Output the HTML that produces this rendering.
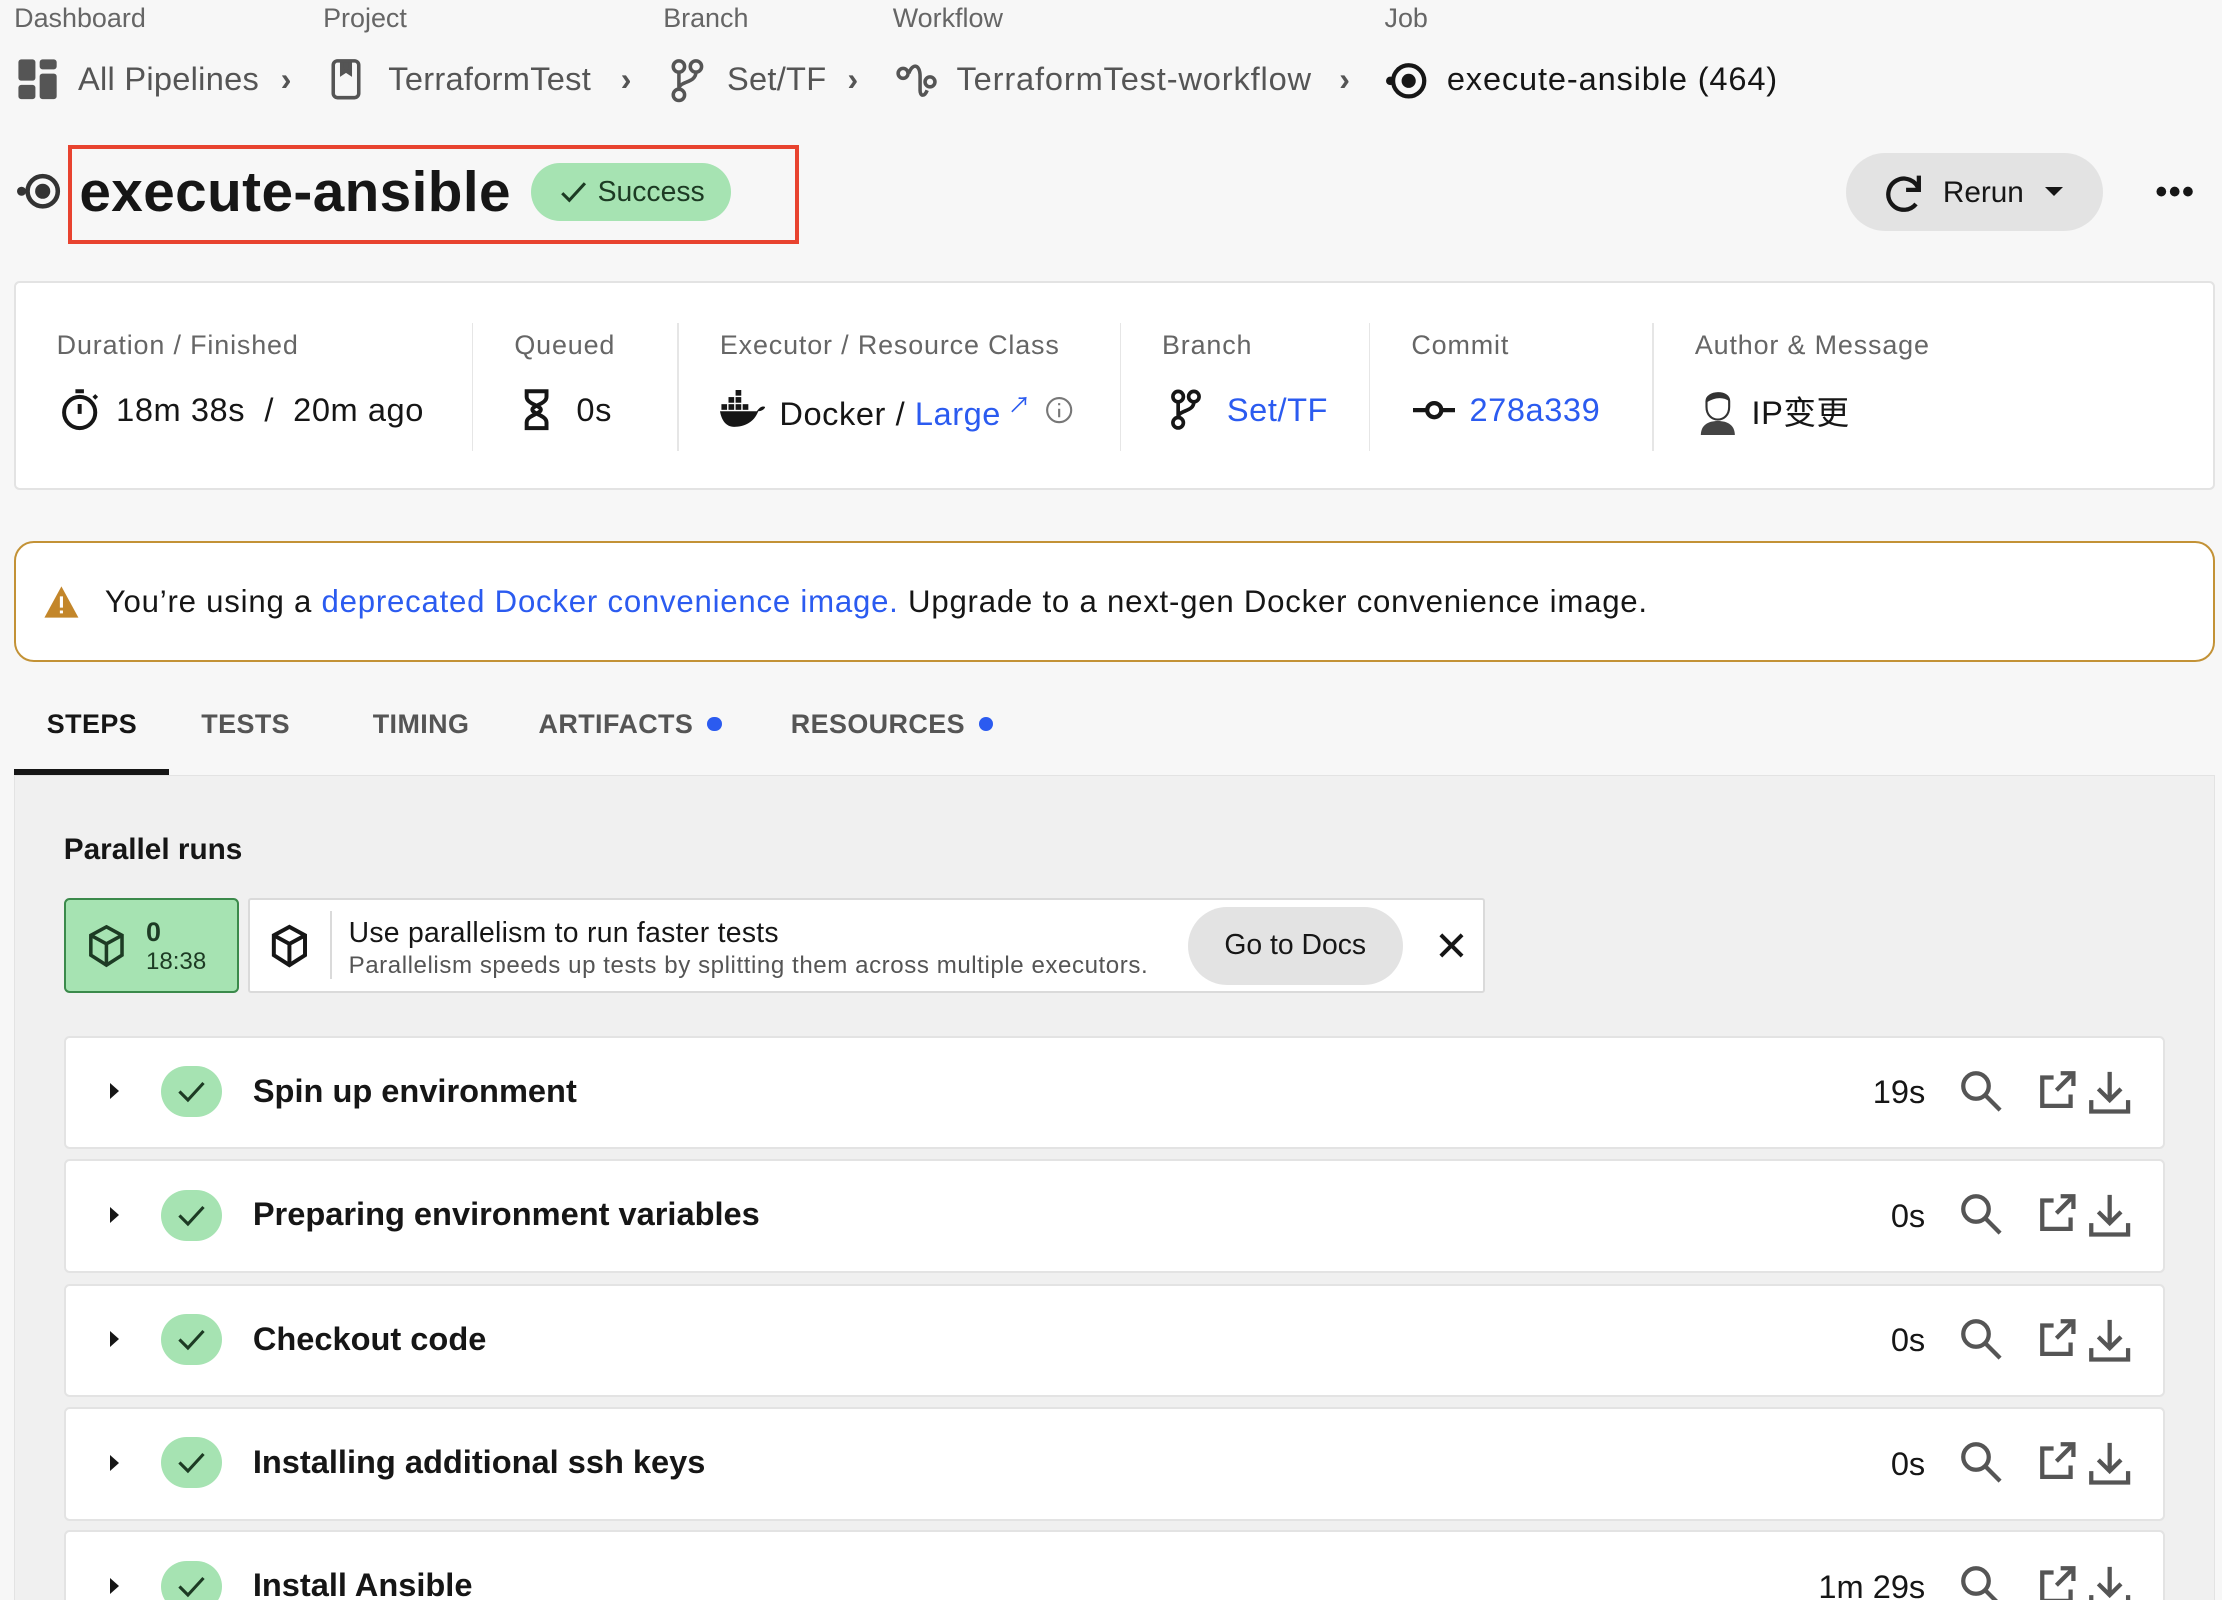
<!DOCTYPE html>
<html><head><meta charset="utf-8"><style>
*{box-sizing:border-box;margin:0;padding:0}
html,body{width:2222px;height:1600px;overflow:hidden;background:#f7f7f7}
#w{position:relative;width:1568px;height:1129px;zoom:1.41709;font-family:"Liberation Sans","Noto Sans CJK SC",sans-serif;color:#161616}
.a{position:absolute;white-space:nowrap}
.lbl{font-size:19px;color:#666;top:2px}
.bc{font-size:23px;color:#555;top:42px;letter-spacing:0.2px}
.cl{font-size:19px;color:#666;top:233px;letter-spacing:0.6px}
.cv{font-size:23px;top:273px;display:flex;align-items:center;gap:10px;letter-spacing:0.4px}
.div{position:absolute;top:228px;width:1px;height:90px;background:#e6e6e6}
.blue{color:#2b5bf0}
.tab{font-size:19px;font-weight:bold;color:#555;top:500px;display:flex;align-items:center;gap:10px;letter-spacing:0.3px}
.dot{width:10px;height:10px;border-radius:50%;background:#2b5bf0;display:inline-block}
.row{position:absolute;left:45px;width:1483px;height:80px;background:#fff;border:2px solid #e3e3e3;border-radius:4px}
.row .tri{position:absolute;left:31px;top:32px;width:0;height:0;border-left:7px solid #161616;border-top:6px solid transparent;border-bottom:6px solid transparent}
.row .ck{position:absolute;left:67px;top:20px;width:43px;height:36px;border-radius:18px;background:#a6e3b2}
.row .t{position:absolute;left:132px;top:24px;font-size:23px;font-weight:bold}
.row .tm{position:absolute;right:168px;top:25px;font-size:23px}
.row svg.ic{position:absolute;top:22px}
</style></head><body><div id="w">
<div class="a lbl" style="left:10px">Dashboard</div>
<div class="a lbl" style="left:228px">Project</div>
<div class="a lbl" style="left:468px">Branch</div>
<div class="a lbl" style="left:630px">Workflow</div>
<div class="a lbl" style="left:977px">Job</div>

<svg class="a" style="left:12px;top:41px" width="30" height="30" viewBox="0 0 30 30" fill="#555"><rect x="1" y="1" width="12" height="15" rx="2"/><rect x="16" y="1" width="12" height="7" rx="2"/><rect x="1" y="19" width="12" height="10" rx="2"/><rect x="16" y="11" width="12" height="18" rx="2"/></svg>
<div class="a bc" style="left:55px">All Pipelines</div>
<div class="a bc" style="left:198px;font-weight:bold">›</div>
<svg class="a" style="left:232px;top:41px" width="24" height="30" viewBox="0 0 24 30" fill="none" stroke="#555" stroke-width="2.5"><rect x="3" y="2" width="18" height="26" rx="3"/><path d="M9 3v8l3-2 3 2V3" fill="#555"/></svg>
<div class="a bc" style="left:274px">TerraformTest</div>
<div class="a bc" style="left:438px;font-weight:bold">›</div>
<svg class="a" style="left:472px;top:41px" width="26" height="32" viewBox="0 0 26 32" fill="none" stroke="#555" stroke-width="2.5"><circle cx="7" cy="6" r="4"/><circle cx="19" cy="6" r="4"/><circle cx="7" cy="26" r="4"/><path d="M7 10v12M19 10c0 8-12 6-12 12"/></svg>
<div class="a bc" style="left:513px">Set/TF</div>
<div class="a bc" style="left:598px;font-weight:bold">›</div>
<svg class="a" style="left:632px;top:44px" width="30" height="26" viewBox="0 0 30 26" fill="none" stroke="#555" stroke-width="2.5"><circle cx="5" cy="8" r="3.5"/><circle cx="24" cy="14" r="3.5"/><path d="M9 8c3-8 8-6 8 2v10c0 4 3 5 5 0"/></svg>
<div class="a bc" style="left:675px;letter-spacing:0.6px">TerraformTest-workflow</div>
<div class="a bc" style="left:945px;font-weight:bold">›</div>
<svg class="a" style="left:978px;top:43px" width="30" height="28" viewBox="0 0 30 28"><circle cx="16" cy="14" r="11" fill="none" stroke="#161616" stroke-width="3"/><circle cx="16" cy="14" r="5" fill="#161616"/><circle cx="3" cy="14" r="3" fill="#161616"/></svg>
<div class="a bc" style="left:1021px;color:#161616;letter-spacing:0.6px">execute-ansible (464)</div>

<svg class="a" style="left:12px;top:120px" width="32" height="30" viewBox="0 0 30 28"><circle cx="17" cy="14" r="10" fill="none" stroke="#333" stroke-width="3"/><circle cx="17" cy="14" r="5" fill="#333"/><circle cx="3" cy="14" r="3" fill="#333"/></svg>
<div class="a" style="left:48px;top:102px;width:516px;height:70px;border:3px solid #e8432f"></div>
<div class="a" style="left:56px;top:113px;font-size:40px;font-weight:bold;letter-spacing:0.3px">execute-ansible</div>
<div class="a" style="left:375px;top:115px;width:141px;height:41px;border-radius:21px;background:#a6e3b2;font-size:20px;color:#1d3b24;display:flex;align-items:center;justify-content:center;gap:6px"><svg width="22" height="18" viewBox="0 0 22 18"><path d="M3 10l5 5L19 3" fill="none" stroke="#1d3b24" stroke-width="2.2"/></svg>Success</div>

<div class="a" style="left:1303px;top:108px;width:181px;height:55px;border-radius:28px;background:#e3e3e3"></div>
<svg class="a" style="left:1328px;top:120px" width="32" height="32" viewBox="0 0 32 32" fill="none" stroke="#161616" stroke-width="3"><path d="M26 14A11 11 0 1 0 24 24"/><path d="M26 4v10H17" fill="none"/></svg>
<div class="a" style="left:1371px;top:124px;font-size:21px">Rerun</div>
<div class="a" style="left:1443px;top:132px;border-top:7px solid #161616;border-left:7px solid transparent;border-right:7px solid transparent"></div>
<div class="a" style="left:1521px;top:122px;font-size:24px;font-weight:bold;letter-spacing:1px">•••</div>

<div class="a" style="left:10px;top:198px;width:1553px;height:148px;background:#fff;border:2px solid #e3e3e3;border-radius:4px"></div>
<div class="a cl" style="left:40px">Duration / Finished</div>
<div class="a cv" style="left:40px"><svg width="32" height="32" viewBox="0 0 32 32" fill="none" stroke="#161616" stroke-width="2.8"><circle cx="16" cy="18" r="11"/><path d="M16 12v7M13 3h6M26 8l2-2"/></svg><span>18m 38s &nbsp;/ &nbsp;20m ago</span></div>
<div class="div" style="left:333px"></div>
<div class="a cl" style="left:363px">Queued</div>
<div class="a cv" style="left:368px"><svg width="22" height="32" viewBox="0 0 22 32" fill="none" stroke="#161616" stroke-width="2.8"><path d="M4 3h14v4c0 5-10 6-10 9s10 4 10 9v4H4v-4c0-5 10-6 10-9S4 12 4 7z"/></svg><span>&nbsp;0s</span></div>
<div class="div" style="left:478px"></div>
<div class="a cl" style="left:508px">Executor / Resource Class</div>
<div class="a cv" style="left:508px"><svg width="32" height="28" viewBox="0 0 32 28" fill="#161616"><rect x="6" y="5" width="4" height="4"/><rect x="11" y="5" width="4" height="4"/><rect x="11" y="0" width="4" height="4"/><rect x="6" y="10" width="4" height="4"/><rect x="11" y="10" width="4" height="4"/><rect x="16" y="10" width="4" height="4"/><rect x="1" y="10" width="4" height="4"/><path d="M0 15h26c2-3 4-4 6-3-1 2-3 3-5 3-3 8-10 11-17 11C4 26 1 21 0 15z"/></svg><span>Docker / <span class="blue">Large</span><sup class="blue" style="font-size:16px"> ↗</sup></span><svg width="20" height="20" viewBox="0 0 20 20" fill="none" stroke="#777" stroke-width="1.5"><circle cx="10" cy="10" r="8.5"/><path d="M10 9v6M10 5v1.5"/></svg></div>
<div class="div" style="left:790px"></div>
<div class="a cl" style="left:820px">Branch</div>
<div class="a cv" style="left:825px"><svg width="24" height="32" viewBox="0 0 26 32" fill="none" stroke="#161616" stroke-width="2.8"><circle cx="7" cy="6" r="4"/><circle cx="19" cy="6" r="4"/><circle cx="7" cy="26" r="4"/><path d="M7 10v12M19 10c0 8-12 6-12 12"/></svg><span class="blue">&nbsp;Set/TF</span></div>
<div class="div" style="left:966px"></div>
<div class="a cl" style="left:996px">Commit</div>
<div class="a cv" style="left:997px;top:276px"><svg width="30" height="20" viewBox="0 0 30 20" fill="none" stroke="#161616" stroke-width="3"><path d="M0 10h9M21 10h9"/><circle cx="15" cy="10" r="5"/></svg><span class="blue">278a339</span></div>
<div class="div" style="left:1166px"></div>
<div class="a cl" style="left:1196px">Author &amp; Message</div>
<div class="a cv" style="left:1198px"><svg width="28" height="34" viewBox="0 0 28 34"><path d="M6 10c0-7 16-8 16 0v4c0 6-4 9-8 9s-8-3-8-9z" fill="#fff" stroke="#333" stroke-width="1.5"/><path d="M6 11c0-8 16-9 16-1-4-3-10-3-16 1z" fill="#333"/><path d="M2 34c0-7 5-10 12-10s12 3 12 10z" fill="#444"/></svg><span>IP变更</span></div>

<div class="a" style="left:10px;top:382px;width:1553px;height:85px;background:#fff;border:2px solid #c39236;border-radius:14px"></div>
<svg class="a" style="left:30px;top:413px" width="26" height="24" viewBox="0 0 26 24"><path d="M13 1L25 23H1z" fill="#c3862a"/><path d="M13 8v8M13 18v2" stroke="#fff" stroke-width="2.2"/></svg>
<div class="a" style="left:74px;top:412px;font-size:22px;letter-spacing:0.55px">You’re using a <span class="blue">deprecated Docker convenience image.</span> Upgrade to a next-gen Docker convenience image.</div>

<div class="a tab" style="left:33px;color:#161616">STEPS</div>
<div class="a tab" style="left:142px">TESTS</div>
<div class="a tab" style="left:263px">TIMING</div>
<div class="a tab" style="left:380px">ARTIFACTS <span class="dot"></span></div>
<div class="a tab" style="left:558px">RESOURCES <span class="dot"></span></div>
<div class="a" style="left:10px;top:543px;width:109px;height:4px;background:#161616"></div>

<div class="a" style="left:10px;top:547px;width:1553px;height:600px;background:#f0f0f0;border:1px solid #e3e3e3"></div>
<div class="a" style="left:45px;top:588px;font-size:21px;font-weight:bold">Parallel runs</div>
<div class="a" style="left:45px;top:634px;width:124px;height:67px;background:#a6e3b2;border:2px solid #3b8a4b;border-radius:4px"></div>
<svg class="a" style="left:62px;top:652px" width="26" height="32" viewBox="0 0 26 32" fill="none" stroke="#1d3b24" stroke-width="2.5"><path d="M13 2L24 8v14l-11 7-11-7V8z"/><path d="M2 8l11 6 11-6M13 14v15"/></svg>
<div class="a" style="left:103px;top:647px;font-size:19px;font-weight:bold;color:#1d3b24">0</div>
<div class="a" style="left:103px;top:669px;font-size:17px;color:#1d3b24">18:38</div>
<div class="a" style="left:175px;top:634px;width:873px;height:67px;background:#fff;border:2px solid #dadada;border-radius:2px"></div>
<svg class="a" style="left:191px;top:652px" width="26" height="32" viewBox="0 0 26 32" fill="none" stroke="#161616" stroke-width="2.8"><path d="M13 2L24 8v14l-11 7-11-7V8z"/><path d="M2 8l11 6 11-6M13 14v15"/></svg>
<div class="a" style="left:233px;top:643px;width:1px;height:48px;background:#dadada"></div>
<div class="a" style="left:246px;top:647px;font-size:20px;letter-spacing:0.2px">Use parallelism to run faster tests</div>
<div class="a" style="left:246px;top:672px;font-size:17px;color:#555;letter-spacing:0.4px">Parallelism speeds up tests by splitting them across multiple executors.</div>
<div class="a" style="left:838px;top:640px;width:152px;height:55px;border-radius:28px;background:#e3e3e3;font-size:20px;display:flex;align-items:center;justify-content:center">Go to Docs</div>
<svg class="a" style="left:1015px;top:658px" width="19" height="19" viewBox="0 0 19 19" stroke="#161616" stroke-width="2.8"><path d="M2 2l15 15M17 2L2 17"/></svg>

<div id="rows"></div>
<script>
var d=[["Spin up environment","19s",731],["Preparing environment variables","0s",818],["Checkout code","0s",906],["Installing additional ssh keys","0s",993],["Install Ansible","1m 29s",1080]];
var h="";d.forEach(function(r){h+='<div class="row" style="top:'+r[2]+'px"><div class="tri"></div><div class="ck"><svg width="43" height="36" viewBox="0 0 43 36"><path d="M13 18l6 6 11-12" fill="none" stroke="#1d3b24" stroke-width="2.2"/></svg></div><div class="t">'+r[0]+'</div><div class="tm">'+r[1]+'</div>'+
'<svg class="ic" style="left:1336px" width="32" height="34" viewBox="0 0 32 34" fill="none" stroke="#555" stroke-width="3"><circle cx="12" cy="12" r="9"/><path d="M19 19l10 10"/></svg>'+
'<svg class="ic" style="left:1392px" width="28" height="30" viewBox="0 0 28 30" fill="none" stroke="#555" stroke-width="3"><path d="M11 6H3v20h20v-8M16 3h9v9M25 3L13 15"/></svg>'+
'<svg class="ic" style="left:1426px" width="32" height="34" viewBox="0 0 32 34" fill="none" stroke="#555" stroke-width="3"><path d="M16 2v20M8 14l8 8 8-8M3 22v8h26v-8"/></svg></div>'});
document.getElementById("rows").innerHTML=h;
</script>
</div></body></html>
